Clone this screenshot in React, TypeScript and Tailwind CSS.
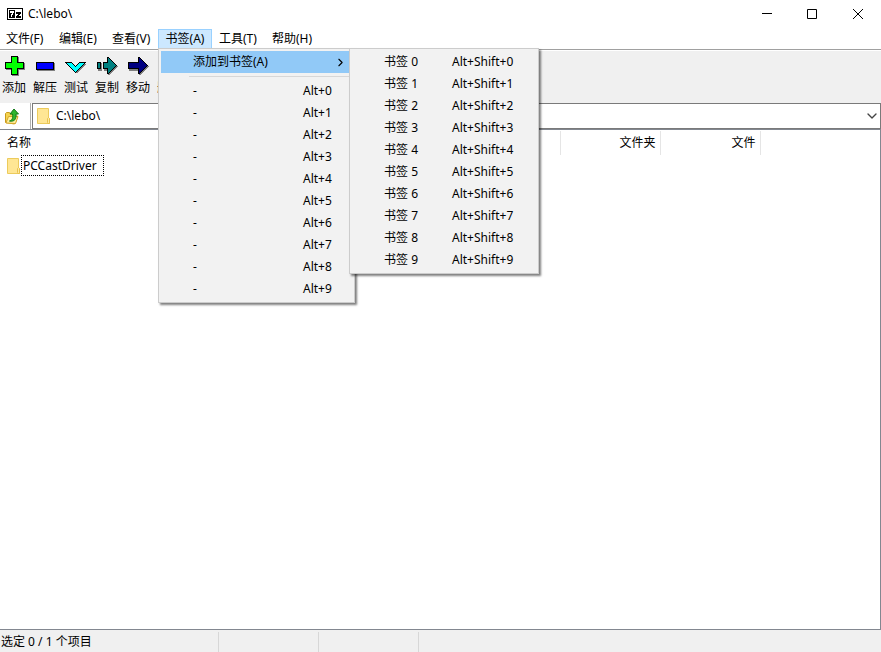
import { ChevronDown, ChevronRight } from "lucide-react";
import type { ReactNode } from "react";

const digits = [0, 1, 2, 3, 4, 5, 6, 7, 8, 9];

const menus = ["文件(F)", "编辑(E)", "查看(V)", "书签(A)", "工具(T)", "帮助(H)"];

const tools: { label: string; icon: ReactNode }[] = [
    {
        label: "添加",
        icon: (
            <>
                <path d="M9 1h7v6h6v7h-6v6H9v-6H3V7h6z" transform="translate(1 1)" fill="#808080" />
                <path d="M9.500 1.500h6v6h6v6h-6v6h-6v-6h-6v-6h6z" fill="#00ff00" stroke="#000" />
            </>
        ),
    },
    {
        label: "解压",
        icon: (
            <>
                <path d="M4 8h18v8H4z" fill="#808080" />
                <path d="M3.500 7.500h17v7h-17z" fill="#0000ff" stroke="#000" />
            </>
        ),
    },
    {
        label: "测试",
        icon: (
            <>
                <path d="M1.500 7.500h6l4 4 4-4h6l-10 10z" transform="translate(1 1)" fill="#808080" />
                <path d="M1.500 7.500h6l4 4 4-4h6l-10 10z" fill="#00ffff" stroke="#000" />
            </>
        ),
    },
    {
        label: "复制",
        icon: (
            <>
                <path d="M2 7h4v8H2zM8 7h4V2h2l8 8.500L14 19h-2v-4H8z" transform="translate(1 1)" fill="#808080" />
                <path d="M2.500 7.500h3v6h-3zM8.500 7.500h4v-5h1l8 8-8 8h-1v-5h-4z" fill="#008080" stroke="#000" />
            </>
        ),
    },
    {
        label: "移动",
        icon: (
            <>
                <path d="M2 7h10V2h2l8 8.500L14 19h-2v-4H2z" transform="translate(1 1)" fill="#808080" />
                <path d="M2.500 7.500h10v-5h1l8 8-8 8h-1v-5h-10z" fill="#000080" stroke="#000" />
            </>
        ),
    },
    {
        label: "删除",
        icon: <path d="M6 4l14 14M20 4L6 18" stroke="#ff0000" strokeWidth="4" />,
    },
];

function FolderIcon() {
    return (
        <svg width="14" height="16" viewBox="0 0 14 16" className="shrink-0">
            <path d="M.500.500h11v9l1 1v5H.500z" fill="#ffe694" stroke="#eccb5c" />
            <path d="M10.500 14.500v-4l1-1 1 1v5h-2z" fill="#ffe9a2" stroke="#e8c24e" />
        </svg>
    );
}

function UpIcon() {
    return (
        <svg width="14" height="17" viewBox="0 0 14 17">
            <path d="M.500 14.500v-9l1-1h3l1 1.500h4v2h3l-2 6.500-1 1.500z" fill="#f5d34f" stroke="#c99a1c" />
            <path d="M1 15l2.500-6.500H13L10.500 15.500z" fill="#fff0a0" stroke="#d5a62a" />
            <path d="M4.500 13c3-1 3.500-3 3-7H5L9 1l4.500 5h-2.500c.500 5-1.500 8-6.500 7z" fill="#2fb52f" stroke="#137a18" />
        </svg>
    );
}

function AppIcon() {
    return (
        <svg width="16" height="12" viewBox="0 0 16 12" shapeRendering="crispEdges">
            <path d="M.500.500h15v11H.500z" fill="#fff" stroke="#000" />
            <path d="M2 2h6v8H2z" fill="#000" />
            <path d="M3 3h4v2H6v2H5v2H4V6h1V5H3z" fill="#fff" />
            <path d="M9 4h5v2h-1v1h-1v1h2v2H9V8h1V7h1V6H9z" fill="#000" />
        </svg>
    );
}

function WindowButtons() {
    return (
        <div className="flex">
            <button aria-label="最小化" className="grid w-[45px] h-7 place-items-center">
                <svg width="10" height="10" viewBox="0 0 10 10"><path d="M0 4.500h10" stroke="#000" /></svg>
            </button>
            <button aria-label="最大化" className="grid w-[46px] h-7 place-items-center">
                <svg width="10" height="10" viewBox="0 0 10 10"><path d="M.500.500h9v9h-9z" fill="none" stroke="#000" /></svg>
            </button>
            <button aria-label="关闭" className="grid w-[46px] h-7 place-items-center">
                <svg width="10" height="10" viewBox="0 0 10 10"><path d="M0 0l10 10M10 0L0 10" stroke="#000" /></svg>
            </button>
        </div>
    );
}

function BookmarkSlots() {
    return (
        <ul className="absolute left-[188px] -top-[3px] w-[190px] border border-[#ccc] bg-[#f2f2f2] py-0.5 shadow-[2px_2px_2px_rgba(0,0,0,0.5)]">
            {digits.map((n) => (
                <li key={n}>
                    <button className="flex w-full h-[22px] items-center justify-between pl-[34px] pr-5">
                        <span>书签 {n}</span>
                        <span className="w-[66px] text-left">Alt+Shift+{n}</span>
                    </button>
                </li>
            ))}
        </ul>
    );
}

function BookmarkMenu() {
    return (
        <ul className="absolute left-0 top-[19px] z-10 w-[197px] border border-[#ccc] bg-[#f2f2f2] p-0.5 shadow-[2px_2px_2px_rgba(0,0,0,0.5)]">
            <li className="relative">
                <button className="flex w-[188px] h-[22px] items-center justify-between bg-[#91c9f7] pl-8 pr-0.5">
                    <span>添加到书签(A)</span>
                    <ChevronRight size={13} strokeWidth={2} />
                </button>
                <BookmarkSlots />
            </li>
            <li className="ml-7 h-[7px] pt-[3px]">
                <hr className="border-[#d7d7d7]" />
            </li>
            {digits.map((n) => (
                <li key={n}>
                    <button className="flex w-full h-[22px] items-center justify-between pl-8 pr-[18px]">
                        <span>-</span>
                        <span className="w-[31px] text-left">Alt+{n}</span>
                    </button>
                </li>
            ))}
        </ul>
    );
}

export default function App() {
    return (
        <div className="flex h-screen flex-col overflow-hidden bg-white font-['Noto_Sans','Noto_Sans_CJK_SC',sans-serif] text-xs text-black">
            <header className="flex h-[29px] shrink-0 items-start justify-between">
                <div className="flex h-7 items-center gap-[5px] pl-[7px]">
                    <AppIcon />
                    <h1>C:\lebo\</h1>
                </div>
                <WindowButtons />
            </header>

            <nav className="h-[21px] shrink-0 border-b border-[#a0a0a0]">
                <ul className="-ml-px flex">
                    {menus.map((menu) => (
                        <li key={menu} className="relative">
                            {menu === "书签(A)" ? (
                                <>
                                    <button className="h-5 w-[54px] border border-[#99d1ff] bg-[#cce8ff] whitespace-nowrap">{menu}</button>
                                    <BookmarkMenu />
                                </>
                            ) : (
                                <button className="h-5 w-[53px] px-[7px] text-left whitespace-nowrap">{menu}</button>
                            )}
                        </li>
                    ))}
                </ul>
            </nav>

            <div className="mt-px flex h-[52px] shrink-0 bg-[#f0f0f0] pt-1">
                {tools.map((tool) => (
                    <button key={tool.label} className="flex w-[31px] shrink-0 flex-col items-center pr-[3px]">
                        <svg width="24" height="22" viewBox="0 0 24 22" className="shrink-0" shapeRendering="crispEdges">{tool.icon}</svg>
                        <span className="whitespace-nowrap leading-[22px]">{tool.label}</span>
                    </button>
                ))}
            </div>

            <div className="flex h-[26px] shrink-0">
                <button aria-label="上一级" className="mr-px w-[31px] border-r border-[#b0b0b0] pl-[5px]">
                    <UpIcon />
                </button>
                <div className="flex flex-1 items-center border border-[#7a7a7a] pl-1">
                    <FolderIcon />
                    <input aria-label="路径" defaultValue="C:\lebo\" className="min-w-0 flex-1 pl-[5px] outline-none" />
                    <button aria-label="展开">
                        <ChevronDown size={16} strokeWidth={2} color="#444" />
                    </button>
                </div>
            </div>

            <main className="flex-1 border-y border-r border-[#828790] pt-px">
                <table className="w-full table-fixed border-collapse">
                    <thead>
                        <tr className="h-6">
                            <th className="w-[560px] border-r border-[#e5e5e5] pl-[7px] text-left font-normal">名称</th>
                            <th className="w-[100px] border-r border-[#e5e5e5] pr-1 text-right font-normal">文件夹</th>
                            <th className="w-[100px] border-r border-[#e5e5e5] pr-1 text-right font-normal">文件</th>
                            <th></th>
                        </tr>
                    </thead>
                    <tbody>
                        <tr>
                            <td colSpan={4}>
                                <div className="flex h-[21px] items-center pl-[7px]">
                                    <FolderIcon />
                                    <span className="h-[21px] border border-dotted border-black pl-px pr-1.5 leading-[19px]">PCCastDriver</span>
                                </div>
                            </td>
                        </tr>
                    </tbody>
                </table>
            </main>

            <footer className="flex h-[22px] shrink-0 bg-[#f0f0f0] pt-0.5 leading-5">
                <span className="w-[219px] border-r border-[#d7d7d7] pl-px">选定 0 / 1 个项目</span>
                <span className="w-[100px] border-r border-[#d7d7d7]"></span>
                <span className="w-[100px] border-r border-[#d7d7d7]"></span>
            </footer>
        </div>
    );
}
